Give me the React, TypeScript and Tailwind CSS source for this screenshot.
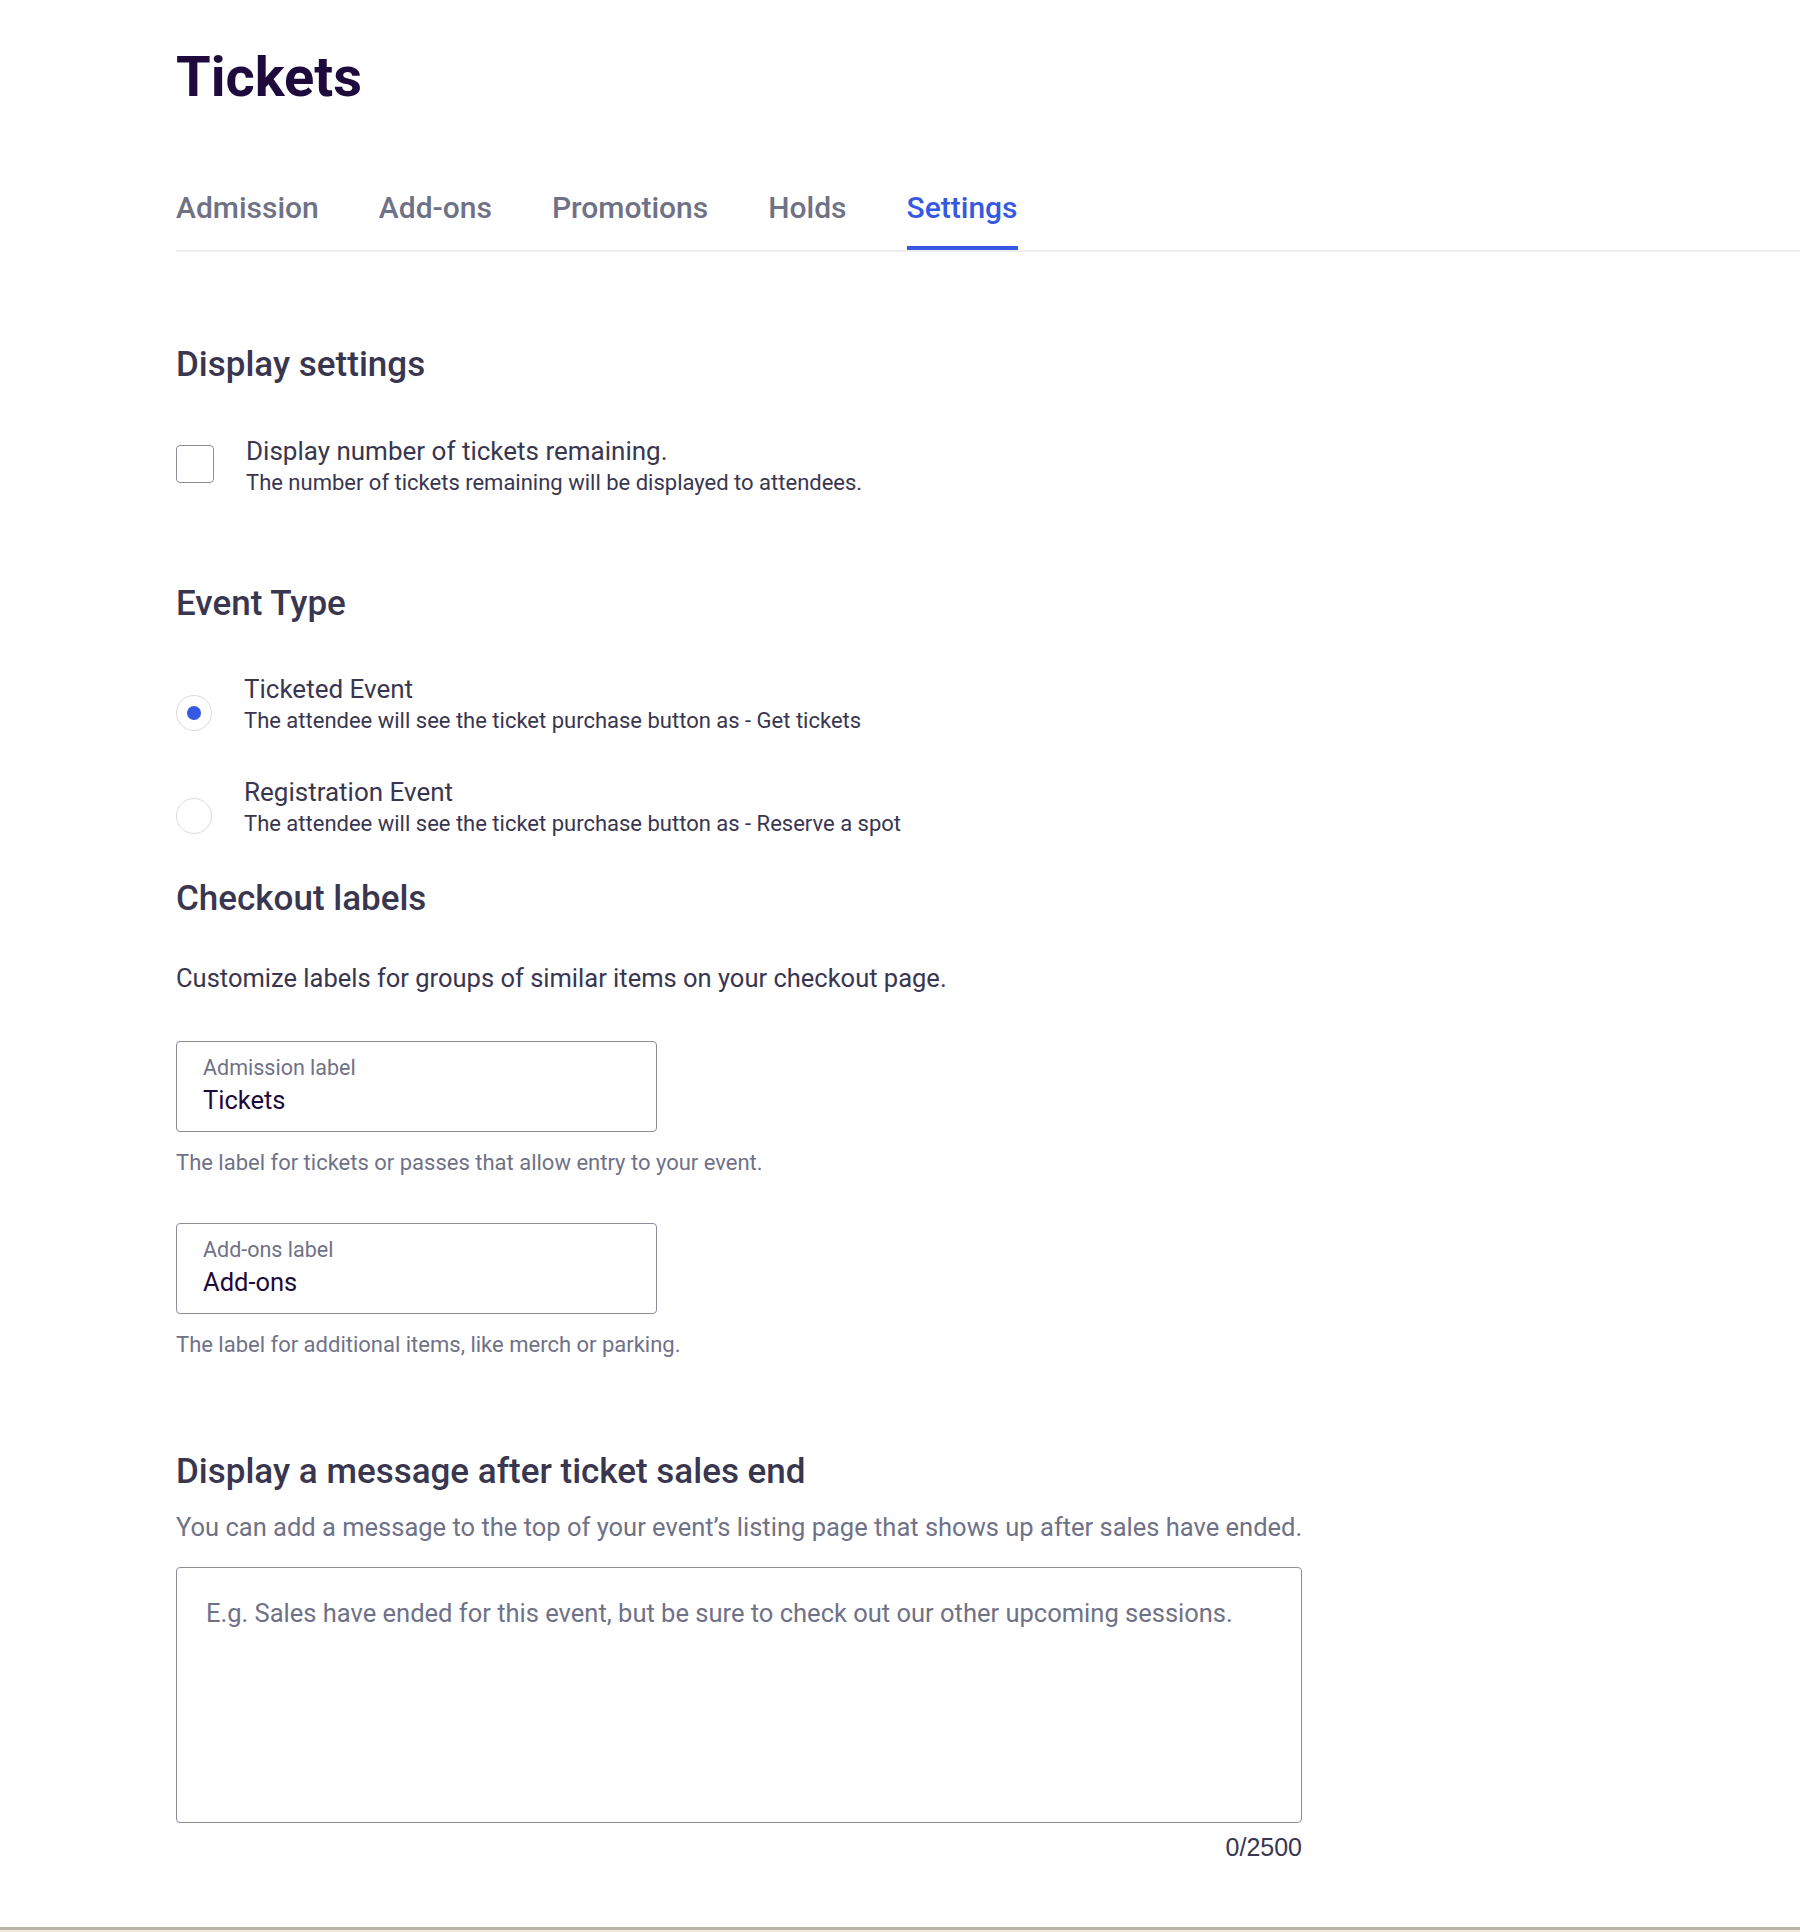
import React from "react";

const font = { fontFamily: "Roboto, 'Noto Sans', sans-serif" };

function Tab({ label, active }: { label: string; active?: boolean }) {
  return (
    <div
      className={
        "pb-[23px] border-b-4 text-[30px] leading-[30px] font-medium " +
        (active ? "border-[#3659e3] text-[#3659e3]" : "border-transparent text-[#6f7287]")
      }
    >
      {label}
    </div>
  );
}

function Radio({ checked, title, desc }: { checked?: boolean; title: string; desc: string }) {
  return (
    <div className="flex items-start">
      <div className="mt-[21px] w-[36px] h-[36px] rounded-full border border-[#dbdae3] flex items-center justify-center shrink-0">
        {checked && <div className="w-[14px] h-[14px] rounded-full bg-[#3659e3]" />}
      </div>
      <div className="ml-[32px]">
        <div className="text-[26px] leading-[30px] text-[#39364f]">{title}</div>
        <div className="mt-[3px] text-[22px] leading-[28px] text-[#39364f]">{desc}</div>
      </div>
    </div>
  );
}

function LabelInput({ label, value }: { label: string; value: string }) {
  return (
    <div className="w-[481px] h-[91px] border border-[#8f8c9c] rounded-[4px] px-[26px] pt-[14px]">
      <div className="text-[21.5px] leading-[24px] text-[#6f7287]">{label}</div>
      <div className="mt-[6px] text-[25.5px] leading-[28px] text-[#1e0a3c]">{value}</div>
    </div>
  );
}

export default function App() {
  return (
    <div className="min-h-[1932px] flex flex-col bg-white" style={font}>
      <div className="flex-1 pl-[176px]">
        <h1 className="pt-[48px] text-[56px] leading-[58px] font-bold text-[#1e0a3c]">Tickets</h1>
        <div className="mt-[87px] flex gap-[60px] border-b-2 border-[#eeedf2]">
          <Tab label="Admission" />
          <Tab label="Add-ons" />
          <Tab label="Promotions" />
          <Tab label="Holds" />
          <Tab label="Settings" active />
        </div>

        <div className="w-[1126px]">
          <h2 className="mt-[93px] text-[35px] leading-[40px] font-medium text-[#39364f]">Display settings</h2>
          <div className="mt-[51px] flex items-start">
            <div className="mt-[9px] w-[38px] h-[38px] rounded-[4px] border border-[#8f8c9c] shrink-0" />
            <div className="ml-[32px]">
              <div className="text-[26px] leading-[30px] text-[#39364f]">Display number of tickets remaining.</div>
              <div className="mt-[3px] text-[22px] leading-[28px] text-[#39364f]">
                The number of tickets remaining will be displayed to attendees.
              </div>
            </div>
          </div>

          <h2 className="mt-[87px] text-[35px] leading-[40px] font-medium text-[#39364f]">Event Type</h2>
          <div className="mt-[50px]">
            <Radio checked title="Ticketed Event" desc="The attendee will see the ticket purchase button as - Get tickets" />
          </div>
          <div className="mt-[42px]">
            <Radio title="Registration Event" desc="The attendee will see the ticket purchase button as - Reserve a spot" />
          </div>

          <h2 className="mt-[41px] text-[35px] leading-[40px] font-medium text-[#39364f]">Checkout labels</h2>
          <p className="mt-[44px] text-[25.5px] leading-[30px] text-[#39364f]">
            Customize labels for groups of similar items on your checkout page.
          </p>
          <div className="mt-[48px]">
            <LabelInput label="Admission label" value="Tickets" />
          </div>
          <p className="mt-[18px] text-[22px] leading-[26px] text-[#6f7287]">
            The label for tickets or passes that allow entry to your event.
          </p>
          <div className="mt-[47px]">
            <LabelInput label="Add-ons label" value="Add-ons" />
          </div>
          <p className="mt-[18px] text-[22px] leading-[26px] text-[#6f7287]">
            The label for additional items, like merch or parking.
          </p>

          <h2 className="mt-[94px] text-[35px] leading-[40px] font-medium text-[#39364f]">
            Display a message after ticket sales end
          </h2>
          <p className="mt-[20px] whitespace-nowrap text-[25.5px] leading-[30px] text-[#6f7287]">
            You can add a message to the top of your event’s listing page that shows up after sales have ended.
          </p>
          <div className="mt-[25px] h-[256px] border border-[#8f8c9c] rounded-[4px] pl-[29px] pr-[29px] pt-[30px]">
            <div className="text-[25.5px] leading-[30px] text-[#6f7287]">
              E.g. Sales have ended for this event, but be sure to check out our other upcoming sessions.
            </div>
          </div>
          <div
            className="mt-[10px] text-right text-[25px] leading-[28px] text-[#39364f]"
            style={{ fontFamily: "'Liberation Sans', Arial, sans-serif" }}
          >
            0/2500
          </div>
        </div>
      </div>
      <div className="h-[3px] bg-[#b9b2a8]" />
      <div className="h-[2px] bg-[#f5ead9]" />
    </div>
  );
}
